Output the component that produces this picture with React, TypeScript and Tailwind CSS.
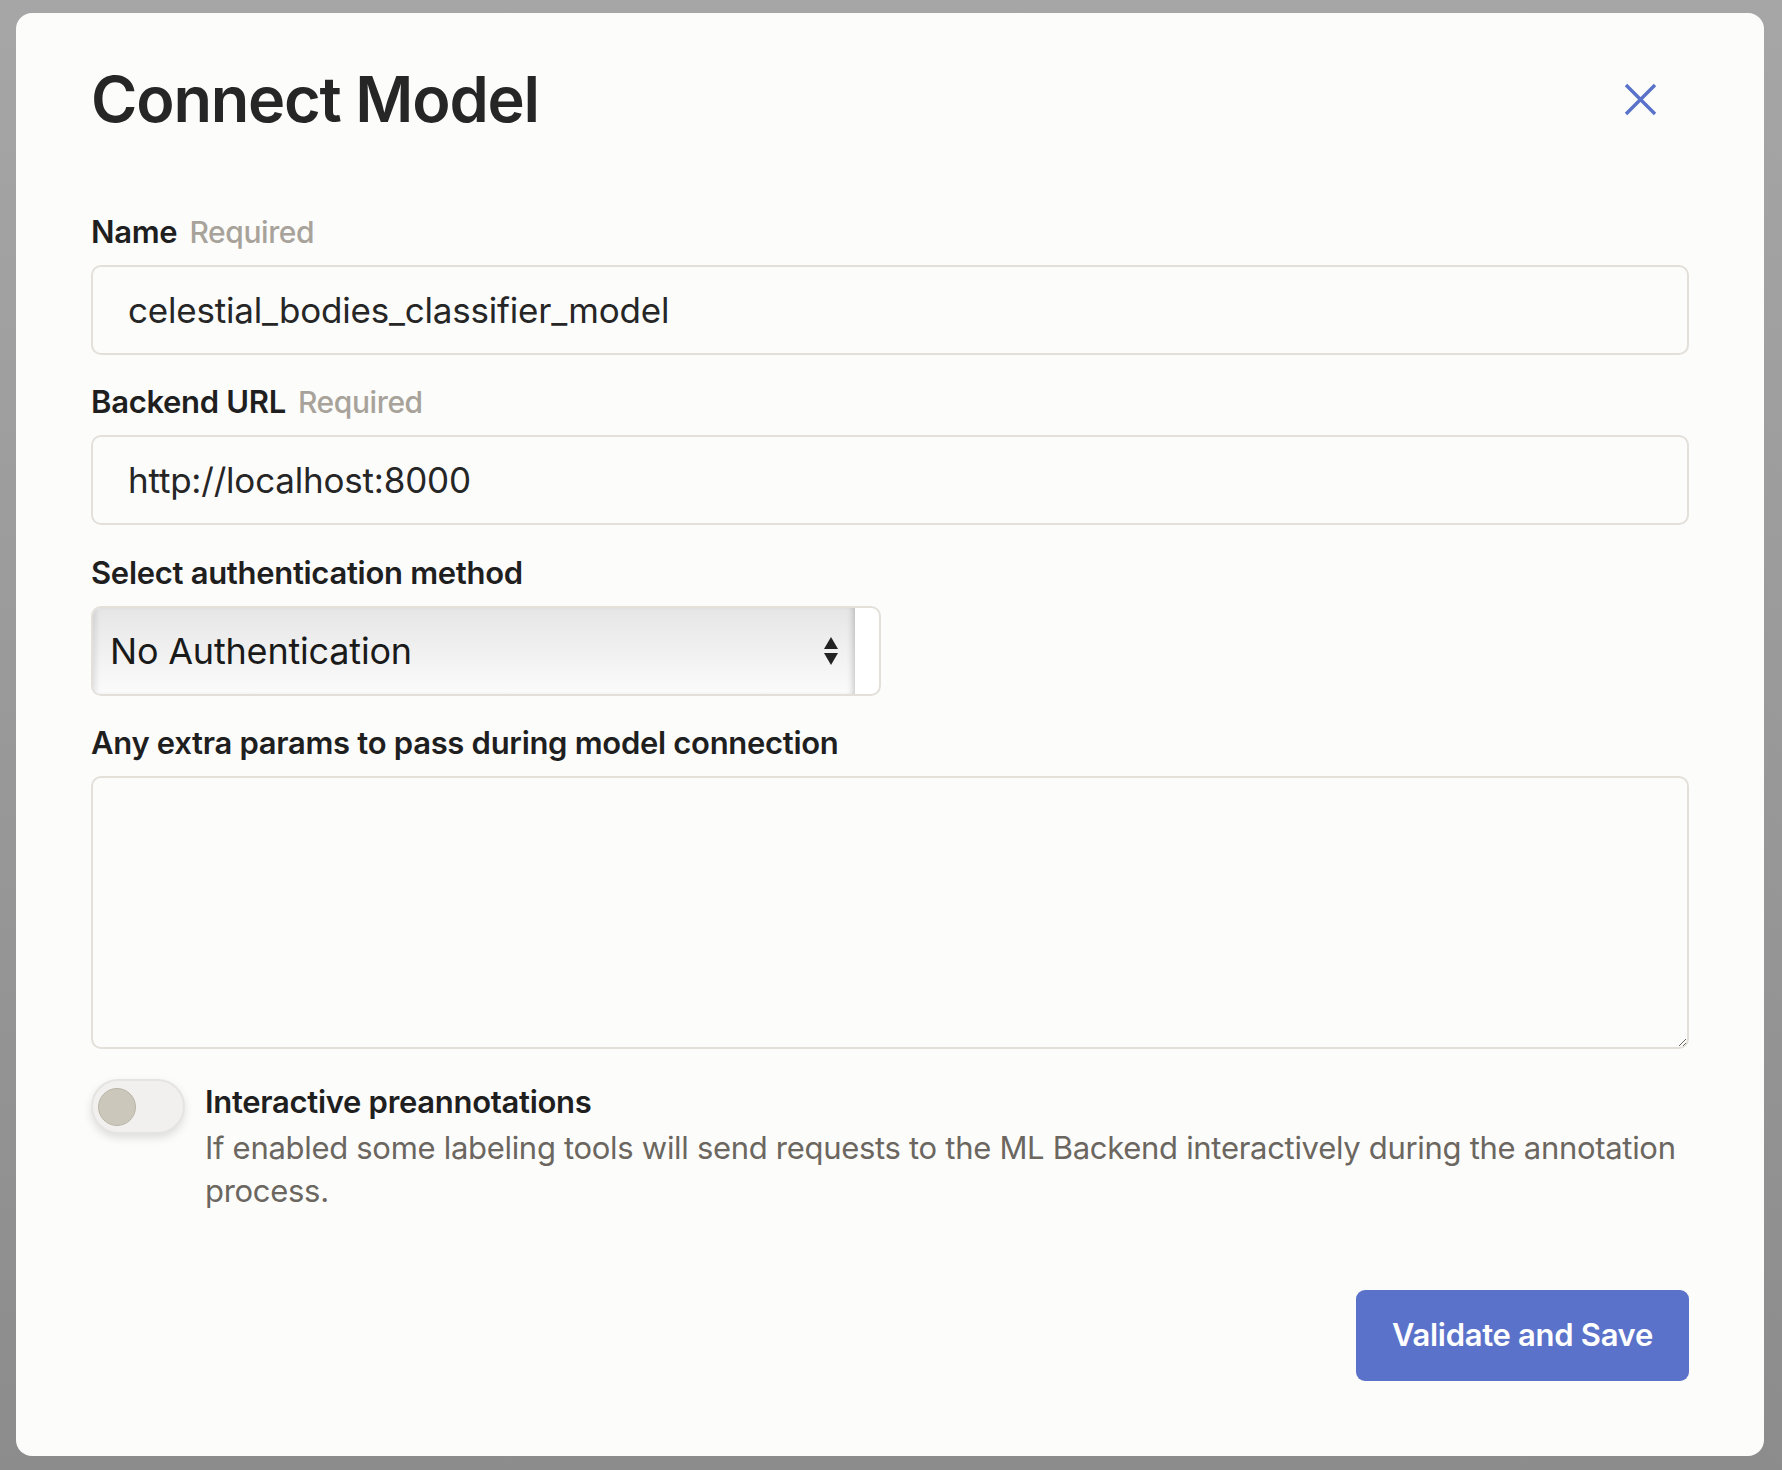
import { useState } from 'react'

const font = { fontFamily: 'Inter, "Noto Sans", sans-serif' }

function Label({ text, required }: { text: string; required?: boolean }) {
    return (
        <div className="flex items-center h-[40px] gap-[12px]">
            <span className="text-[31px] font-semibold text-[#1f1f1f] tracking-[-0.3px]">{text}</span>
            {required && <span className="text-[30px] font-medium text-[#a8a39a] tracking-[-0.4px]">Required</span>}
        </div>
    )
}

function TextInput({ value }: { value: string }) {
    return (
        <div className="mt-[13px] h-[90px] w-full rounded-[10px] border-2 border-[#e3e0da] bg-[#fcfcfb] flex items-center pl-[35px]">
            <span className="text-[35px] text-[#262626] tracking-[-0.2px]">{value}</span>
        </div>
    )
}

function AuthSelect() {
    return (
        <div className="mt-[13px] h-[90px] w-[790px] rounded-[10px] border-2 border-[#e3e0da] bg-white flex overflow-hidden">
            <div className="flex-1 flex items-center pl-[17px] pr-[16px] bg-gradient-to-b from-[#e6e6e6] to-[#fbfbfb] shadow-[inset_6px_0_6px_-4px_rgba(0,0,0,0.12),inset_-6px_0_6px_-4px_rgba(0,0,0,0.2)]">
                <span className="flex-1 text-[36px] text-[#1a1a1a] tracking-[-0.2px]">No Authentication</span>
                <svg width="16" height="32" viewBox="0 0 16 32" className="text-[#222]">
                    <path d="M8 2 L15 14 L1 14 Z" fill="currentColor" />
                    <path d="M1 18 L15 18 L8 30 Z" fill="currentColor" />
                </svg>
            </div>
            <div className="w-[24px]" />
        </div>
    )
}

function Toggle() {
    const [on, setOn] = useState(false)
    return (
        <button
            type="button"
            onClick={() => setOn(!on)}
            className="w-[94px] h-[55px] shrink-0 rounded-full bg-[#f1f0ee] border-2 border-[#e6e4e0] shadow-[0_4px_8px_rgba(0,0,0,0.12)] flex items-center px-[5px]"
        >
            <span className="w-[38px] h-[38px] rounded-full bg-[#cbc7bb] border border-[#b9b5a9]" />
        </button>
    )
}

export default function App() {
    return (
        <div
            className="min-h-[1470px] w-full bg-gradient-to-b from-[#a6a6a6] to-[#8c8c8c] pl-[16px] pt-[13px]"
            style={font}
        >
            <div className="w-[1748px] h-[1443px] rounded-[16px] bg-[#fcfcfb] px-[75px] flex flex-col">
                <div className="pt-[46px] h-[126px] flex items-center">
                    <h1 className="flex-1 text-[63px] font-semibold text-[#262626] tracking-[-1.2px]">Connect Model</h1>
                    <button type="button" className="mr-[32px] w-[33px] h-[33px] text-[#5a72c9]">
                        <svg width="33" height="33" viewBox="0 0 33 33">
                            <path d="M2 2 L31 31 M31 2 L2 31" stroke="currentColor" strokeWidth="3.4" />
                        </svg>
                    </button>
                </div>

                <div className="mt-[73px]">
                    <Label text="Name" required />
                    <TextInput value="celestial_bodies_classifier_model" />
                </div>

                <div className="mt-[27px]">
                    <Label text="Backend URL" required />
                    <TextInput value="http://localhost:8000" />
                </div>

                <div className="mt-[28px]">
                    <Label text="Select authentication method" />
                    <AuthSelect />
                </div>

                <div className="mt-[27px]">
                    <Label text="Any extra params to pass during model connection" />
                    <textarea className="mt-[13px] block h-[273px] w-full rounded-[10px] border-2 border-[#e3e0da] bg-[#fcfcfb] outline-none" />
                </div>

                <div className="mt-[30px] flex gap-[20px]">
                    <Toggle />
                    <div className="flex flex-col">
                        <div className="h-[47px] flex items-center text-[31px] font-semibold text-[#1f1f1f] tracking-[-0.3px]">
                            Interactive preannotations
                        </div>
                        <p className="text-[31px] leading-[43px] text-[#6b6760] tracking-[-0.3px]">
                            If enabled some labeling tools will send requests to the ML Backend interactively during the annotation process.
                        </p>
                    </div>
                </div>

                <div className="mt-[78px] flex justify-end">
                    <button
                        type="button"
                        className="w-[333px] h-[91px] rounded-[9px] bg-[#5a72c9] text-white text-[31px] font-semibold tracking-[-0.3px]"
                    >
                        Validate and Save
                    </button>
                </div>
            </div>
        </div>
    )
}
